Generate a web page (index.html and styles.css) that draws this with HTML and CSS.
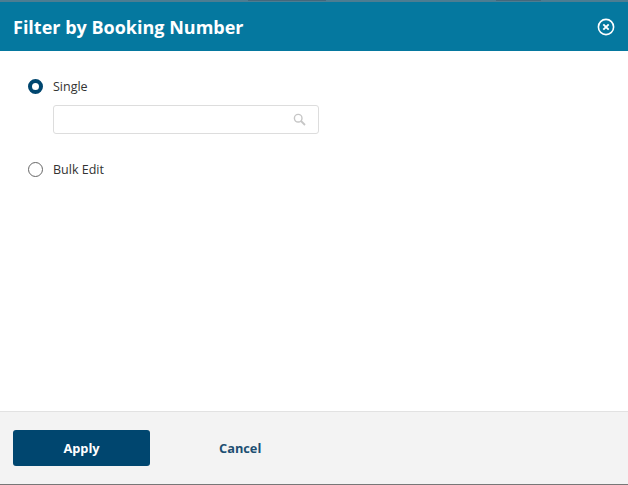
FILE: index.html
```html
<!DOCTYPE html>
<html>
<head>
    <meta charset="UTF-8">
    <link rel="stylesheet" href="styles.css">
</head>
<body>
    <div class="modal">
        <div class="top-strip">
            <span class="strip-mark mark-one"></span>
            <span class="strip-mark mark-two"></span>
        </div>
        <div class="modal-header">
            <h1>Filter by Booking Number</h1>
            <svg class="close-icon" width="18" height="18" viewBox="0 0 18 18">
                <circle cx="9" cy="9" r="7.6" fill="none" stroke="#fff" stroke-width="1.6"/>
                <path d="M6.3 6.3l5.4 5.4M11.7 6.3l-5.4 5.4" fill="none" stroke="#fff" stroke-width="1.9"/>
            </svg>
        </div>
        <div class="modal-body">
            <div class="option">
                <span class="radio checked"></span>
                <span>Single</span>
            </div>
            <div class="search-box">
                <svg class="search-icon" width="13" height="13" viewBox="0 0 13 13">
                    <circle cx="5.2" cy="5.2" r="3.8" fill="none" stroke="#c6c6c6" stroke-width="1.4"/>
                    <path d="M8 8l4 4" fill="none" stroke="#c6c6c6" stroke-width="1.8"/>
                </svg>
            </div>
            <div class="option">
                <span class="radio"></span>
                <span>Bulk Edit</span>
            </div>
        </div>
        <div class="modal-footer">
            <button class="btn-apply">Apply</button>
            <button class="btn-cancel">Cancel</button>
        </div>
    </div>
</body>
</html>
```

FILE: styles.css
```css
body {
    margin: 0;
    font-family: "Open Sans", Arial, sans-serif;
    color: #333;
    background-color: #fff;
}
.modal {
    height: 485px;
    display: flex;
    flex-direction: column;
    box-sizing: border-box;
    border-bottom: 1px solid #777;
}
.top-strip {
    height: 2px;
    display: flex;
    background-color: #4d7d92;
}
.strip-mark {
    height: 1px;
    background-color: #45687c;
}
.mark-one {
    width: 78px;
    margin-left: 248px;
}
.mark-two {
    width: 45px;
    margin-left: 170px;
}
.modal-header {
    height: 49px;
    flex-shrink: 0;
    display: flex;
    align-items: center;
    justify-content: space-between;
    padding: 0 13px;
    background-color: #05789f;
    color: #fff;
}
.modal-header h1 {
    margin: 0;
    font-size: 18px;
    font-weight: 700;
}
.close-icon {
    display: block;
}
.modal-body {
    flex: 1;
    padding: 26px 28px 0;
    font-size: 12.5px;
}
.option {
    height: 18px;
    display: flex;
    align-items: center;
    gap: 10px;
}
.radio {
    width: 15px;
    height: 15px;
    box-sizing: border-box;
    border: 1px solid #666;
    border-radius: 50%;
}
.radio.checked {
    border: 4.5px solid #00466f;
    background-color: #fff;
}
.search-box {
    width: 266px;
    height: 29px;
    box-sizing: border-box;
    display: flex;
    align-items: center;
    justify-content: flex-end;
    margin: 10px 0 26px 25px;
    padding-right: 12px;
    border: 1px solid #ddd;
    border-radius: 3px;
    background-color: #fff;
}
.modal-footer {
    height: 73px;
    box-sizing: border-box;
    display: flex;
    align-items: center;
    padding: 0 13px 1px;
    background-color: #f3f3f3;
    border-top: 1px solid #e2e2e2;
}
.modal-footer button {
    font-family: inherit;
    font-size: 12.8px;
    font-weight: 700;
    border: none;
    cursor: pointer;
}
.btn-apply {
    width: 137px;
    height: 36px;
    background-color: #00466f;
    color: #fff;
    border-radius: 3px;
}
.btn-cancel {
    margin-left: 69px;
    padding: 0;
    background: none;
    color: #1d4f72;
}
```
